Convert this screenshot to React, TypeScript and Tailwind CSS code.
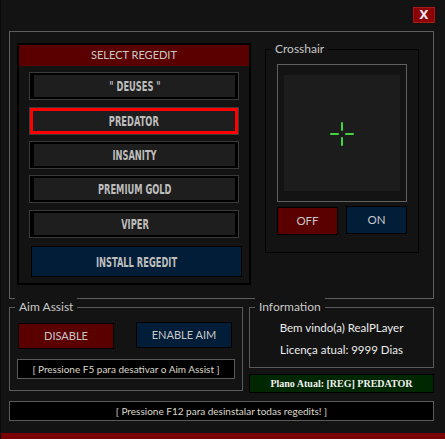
import React from "react";

const cond = "font-['DejaVu_Sans_Condensed','DejaVu_Sans',sans-serif] font-bold";

function RegButton({ label, selected }: { label: string; selected?: boolean }) {
  return (
    <div
      className={`w-[210px] h-[28px] border border-[#3a3a3a] ${
        selected ? "bg-[#ff0000] p-[3px]" : "bg-black pl-[4px] pr-[3px] py-[2px]"
      }`}
    >
      <div className="w-full h-full bg-[#1e1e1e] flex items-center justify-center">
        <span className={`inline-block scale-x-[0.66] text-[14px] leading-none text-[#bdbdbd] ${cond}`}>{label}</span>
      </div>
    </div>
  );
}

function Group({
  label,
  className,
  children,
}: {
  label: string;
  className: string;
  children?: React.ReactNode;
}) {
  return (
    <div className={`relative border ${className}`}>
      <span className="absolute left-[5px] -top-[10px] px-[4px] bg-[#131313] text-[12px] leading-[18px] text-[#c8c8c8]">
        {label}
      </span>
      {children}
    </div>
  );
}

export default function App() {
  return (
    <div className="w-[445px] h-[439px] bg-[#131313] flex flex-col border-l border-[#0a0a0a] font-['Lato',sans-serif]">
      {/* header */}
      <div className="h-[31px] flex justify-end pt-[7px] pr-[10px]">
        <div className="w-[22px] h-[16px] bg-[#8b0000] border border-[#a81818] flex items-center justify-center text-[12px] leading-none font-bold text-[#e8e0f0] font-['DejaVu_Sans',sans-serif]">
          X
        </div>
      </div>

      {/* main box */}
      <div className="ml-[8px] w-[425px] h-[268px] border border-[#5e5e5e] flex items-start pl-[7px] pt-[11px]">
        {/* left panel */}
        <div className="w-[234px] h-[242px] border-2 border-black flex flex-col">
          <div className="h-[21px] bg-[#5a0000] flex items-center justify-center text-[11px] text-[#c8c8c8]">
            SELECT REGEDIT
          </div>
          <div className="flex flex-col pl-[10px] pt-[6px]">
            <RegButton label={'" DEUSES "'} />
            <div className="mt-[7px]">
              <RegButton label="PREDATOR" selected />
            </div>
            <div className="mt-[6px]">
              <RegButton label="INSANITY" />
            </div>
            <div className="mt-[6px]">
              <RegButton label="PREMIUM GOLD" />
            </div>
            <div className="mt-[7px]">
              <RegButton label="VIPER" />
            </div>
            <div className="mt-[8px] ml-[2px] w-[211px] h-[31px] bg-[#011d38] border border-black flex items-center justify-center">
              <span className={`inline-block scale-x-[0.66] text-[14px] leading-none text-[#bdbdbd] ${cond}`}>
                INSTALL REGEDIT
              </span>
            </div>
          </div>
        </div>

        {/* crosshair group */}
        <Group label="Crosshair" className="ml-[14px] mt-[6px] w-[154px] h-[204px] border-[#050505] pl-[11px] pt-[14px]">
          <div className="w-[130px] h-[138px] border border-[#606060] px-[6px] py-[10px]">
            <div className="w-full h-full bg-[#1c1c1c] flex items-center justify-center">
              <svg width="24" height="24" viewBox="0 0 24 24" className="mt-[1px]">
                <rect x="0" y="11" width="9" height="2" rx="1" fill="#3fd63f" />
                <rect x="15" y="11" width="9" height="2" rx="1" fill="#3fd63f" />
                <rect x="11" y="0" width="2" height="9" rx="1" fill="#3fd63f" />
                <rect x="11" y="15" width="2" height="9" rx="1" fill="#3fd63f" />
              </svg>
            </div>
          </div>
          <div className="mt-[4px] flex items-start gap-[8px]">
            <div className="mt-[1px] w-[61px] h-[28px] bg-[#5a0000] border border-black flex items-center justify-center text-[11.5px] text-[#c8c8c8]">
              OFF
            </div>
            <div className="w-[61px] h-[28px] bg-[#011d38] border border-black flex items-center justify-center text-[11.5px] text-[#c8c8c8]">
              ON
            </div>
          </div>
        </Group>
      </div>

      {/* bottom row */}
      <div className="mt-[8px] flex items-start">
        <Group label="Aim Assist" className="ml-[8px] w-[234px] h-[84px] border-[#5a5a5a] pl-[7px] pt-[14px]">
          <div className="flex items-start">
            <div className="ml-[1px] mt-[1px] w-[96px] h-[26px] bg-[#5a0000] border border-black flex items-center justify-center text-[11px] text-[#c8c8c8]">
              DISABLE
            </div>
            <div className="ml-[22px] w-[96px] h-[26px] bg-[#011d38] border border-black flex items-center justify-center text-[11px] text-[#c8c8c8]">
              ENABLE AIM
            </div>
          </div>
          <div className="mt-[10px] w-[218px] h-[20px] bg-black border border-[#5a5a5a] flex items-center justify-center text-[10px] whitespace-nowrap text-[#dcd8c8]">
            [ Pressione F5 para desativar o Aim Assist ]
          </div>
        </Group>

        <div className="ml-[6px] flex flex-col">
          <Group label="Information" className="w-[185px] h-[61px] border-[#5a5a5a] flex flex-col items-center pt-[11px]">
            <div className="text-[11.5px] leading-[18px] text-[#ececec]">Bem vindo(a) RealPLayer</div>
            <div className="mt-[4px] text-[11.5px] leading-[18px] text-[#ececec]">Licença atual: 9999 Dias</div>
          </Group>
          <div className="mt-[6px] w-[185px] h-[19px] bg-[#002800] border border-black flex items-center justify-center text-[10px] font-bold text-[#f0f0f0] font-['Liberation_Serif',serif]">
            Plano Atual: [REG] PREDATOR
          </div>
        </div>
      </div>

      {/* bottom bar */}
      <div className="mt-[8px] ml-[8px] w-[425px] h-[20px] bg-black border border-[#5a5a5a] flex items-center justify-center text-[10px] whitespace-nowrap text-[#dcd8c8]">
        [ Pressione F12 para desinstalar todas regedits! ]
      </div>

      <div className="mt-auto h-[6px] bg-[#7a0000]" />
    </div>
  );
}
